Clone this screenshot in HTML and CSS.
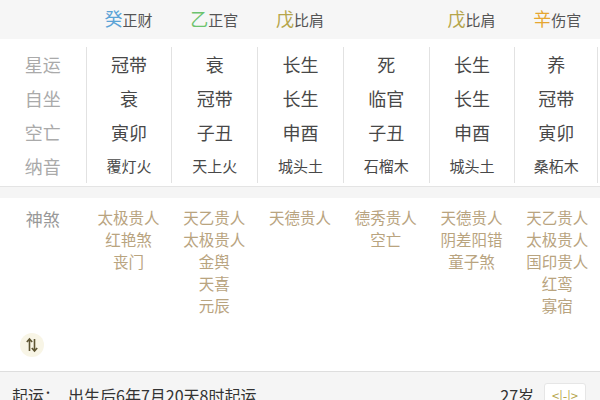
FILE: index.html
```html
<!DOCTYPE html>
<html lang="zh">
<head>
    <meta charset="UTF-8">
    <title>排盘</title>
    <link rel="stylesheet" href="styles.css">
</head>
<body>
    <div class="gods">
        <div class="col"></div>
        <div class="col"><span class="stem water">癸</span>正财</div>
        <div class="col"><span class="stem wood">乙</span>正官</div>
        <div class="col"><span class="stem earth">戊</span>比肩</div>
        <div class="col"></div>
        <div class="col"><span class="stem earth">戊</span>比肩</div>
        <div class="col"><span class="stem metal">辛</span>伤官</div>
    </div>

    <section class="table">
        <div class="column labels">
            <div class="cell">星运</div>
            <div class="cell">自坐</div>
            <div class="cell">空亡</div>
            <div class="cell small">纳音</div>
        </div>
        <div class="column">
            <div class="cell">冠带</div><div class="cell">衰</div><div class="cell">寅卯</div><div class="cell small">覆灯火</div>
        </div>
        <div class="column">
            <div class="cell">衰</div><div class="cell">冠带</div><div class="cell">子丑</div><div class="cell small">天上火</div>
        </div>
        <div class="column">
            <div class="cell">长生</div><div class="cell">长生</div><div class="cell">申酉</div><div class="cell small">城头土</div>
        </div>
        <div class="column">
            <div class="cell">死</div><div class="cell">临官</div><div class="cell">子丑</div><div class="cell small">石榴木</div>
        </div>
        <div class="column">
            <div class="cell">长生</div><div class="cell">长生</div><div class="cell">申酉</div><div class="cell small">城头土</div>
        </div>
        <div class="column last">
            <div class="cell">养</div><div class="cell">冠带</div><div class="cell">寅卯</div><div class="cell small">桑柘木</div>
        </div>
    </section>

    <section class="shensha">
        <div class="sha-grid">
            <div class="sha-label">神煞</div>
            <div class="sha-list"><span>太极贵人</span><span>红艳煞</span><span>丧门</span></div>
            <div class="sha-list"><span>天乙贵人</span><span>太极贵人</span><span>金舆</span><span>天喜</span><span>元辰</span></div>
            <div class="sha-list"><span>天德贵人</span></div>
            <div class="sha-list"><span>德秀贵人</span><span>空亡</span></div>
            <div class="sha-list"><span>天德贵人</span><span>阴差阳错</span><span>童子煞</span></div>
            <div class="sha-list"><span>天乙贵人</span><span>太极贵人</span><span>国印贵人</span><span>红鸾</span><span>寡宿</span></div>
        </div>
        <div class="toggle">
            <svg width="14" height="16" viewBox="0 0 14 16">
                <path d="M4.5 14V2M1.8 5L4.5 2L7.2 5" fill="none" stroke="#5e5533" stroke-width="1.6"/>
                <path d="M9.5 2V14M6.8 11L9.5 14L12.2 11" fill="none" stroke="#5e5533" stroke-width="1.6"/>
            </svg>
        </div>
    </section>

    <footer class="qiyun">
        <span class="qy-label">起运：</span>
        <span class="qy-text">出生后6年7月20天8时起运</span>
        <span class="age">27岁</span>
        <span class="switch">&lt;|-|&gt;</span>
    </footer>
</body>
</html>
```

FILE: styles.css
```css
body {
    margin: 0;
    width: 600px;
    height: 400px;
    overflow: hidden;
    background: #f5f5f5;
    font-family: "Noto Sans CJK SC", "Noto Sans", sans-serif;
    color: #484848;
}
.gods {
    display: grid;
    grid-template-columns: repeat(7, 1fr);
    height: 38px;
    align-items: center;
    background: #f6f6f6;
    font-size: 15px;
    color: #555;
    padding-bottom: 1px;
}
.gods .col {
    text-align: center;
    line-height: 34px;
}
.stem {
    font-size: 18px;
}
.water { color: #5ba3d6; }
.wood { color: #6cc36e; }
.earth { color: #b5a54a; }
.metal { color: #e6a630; }

.table {
    display: grid;
    grid-template-columns: repeat(7, 1fr);
    background: #fff;
    padding: 8px 0 3px;
    border-bottom: 1px solid #e4e4e4;
}
.column {
    border-left: 1px solid #e2e2e2;
}
.column.labels {
    border-left: none;
    color: #aaa;
}
.column.last {
    border-right: 1px solid #e2e2e2;
    margin-right: 2px;
}
.cell {
    height: 34px;
    line-height: 34px;
    text-align: center;
    font-size: 18px;
}
.cell.small {
    font-size: 15px;
}
.labels .cell.small {
    font-size: 18px;
}

.shensha {
    margin-top: 11px;
    background: #fff;
    height: 174px;
    padding-top: 8px;
    box-sizing: border-box;
    border-bottom: 1px solid #dedede;
}
.sha-grid {
    display: grid;
    grid-template-columns: repeat(7, 1fr);
}
.sha-label {
    text-align: center;
    font-size: 17px;
    color: #999;
    line-height: 26px;
}
.sha-list {
    display: flex;
    flex-direction: column;
    align-items: center;
    font-size: 15.5px;
    line-height: 22px;
    color: #b9a47f;
}
.toggle {
    width: 24px;
    height: 24px;
    margin: 17px 0 0 20px;
    border-radius: 50%;
    background: #f8f5e6;
    display: flex;
    align-items: center;
    justify-content: center;
}

.qiyun {
    display: flex;
    align-items: center;
    height: 28px;
    padding: 9px 12px 0;
    font-size: 16px;
    color: #333;
}
.qy-label {
    margin-right: 8px;
}
.age {
    margin-left: auto;
    margin-right: 10px;
}
.switch {
    background: #fff;
    border: 1px solid #e6e6e6;
    border-radius: 3px;
    padding: 2px 7px;
    font-size: 13px;
    color: #b5a54a;
    margin-right: 2px;
}
```
